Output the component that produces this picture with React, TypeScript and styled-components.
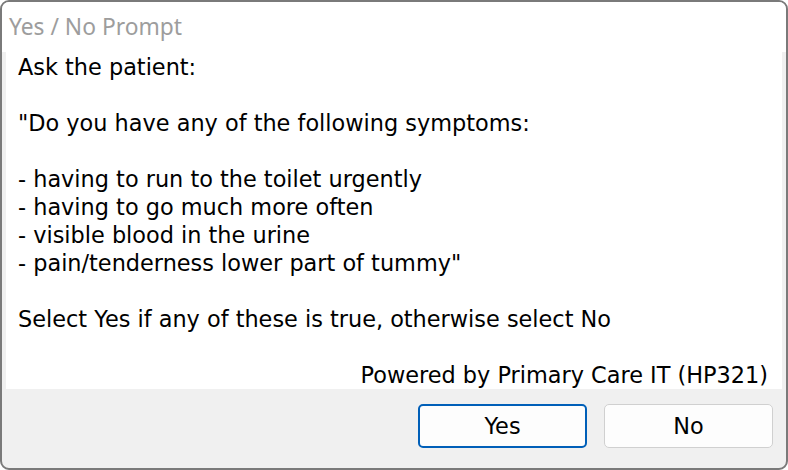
import React, { ReactElement } from 'react'
import styled, { createGlobalStyle } from 'styled-components'

const GlobalStyle = createGlobalStyle`
  html, body {
    margin: 0;
    padding: 0;
    background: #ffffff;
  }
`

const lines = [
  'Ask the patient:',
  '',
  '"Do you have any of the following symptoms:',
  '',
  '- having to run to the toilet urgently',
  '- having to go much more often',
  '- visible blood in the urine',
  '- pain/tenderness lower part of tummy"',
  '',
  'Select Yes if any of these is true, otherwise select No',
  '',
]

export default function App(): ReactElement {
  return (
    <>
      <GlobalStyle />
      <Window>
        <TitleBar>Yes / No Prompt</TitleBar>
        <Content>
          {lines.map((line, i) => (
            <Line key={i}>{line || '\u00a0'}</Line>
          ))}
          <Credit>Powered by Primary Care IT (HP321)</Credit>
        </Content>
        <Footer>
          <DialogButton primary>Yes</DialogButton>
          <DialogButton>No</DialogButton>
        </Footer>
      </Window>
    </>
  )
}

const Window = styled.div`
  box-sizing: border-box;
  width: 788px;
  height: 470px;
  border: 2px solid #7a7a7a;
  border-radius: 9px;
  background: #f0f0f0;
  overflow: hidden;
  display: flex;
  flex-direction: column;
`

const TitleBar = styled.div`
  height: 50px;
  background: #ffffff;
  padding-left: 7px;
  font-family: 'Noto Sans', 'Open Sans', sans-serif;
  font-size: 22.8px;
  line-height: 50px;
  color: #9d9d9d;
`

const Content = styled.div`
  margin: 0 4px;
  height: 336px;
  background: #ffffff;
  padding: 1px 14px 0 12px;
  font-family: 'DejaVu Sans', sans-serif;
  font-size: 22.4px;
  line-height: 28px;
  color: #000000;
`

const Line = styled.div`
  white-space: pre;
`

const Credit = styled.div`
  text-align: right;
`

const Footer = styled.div`
  flex: 1;
  display: flex;
  justify-content: flex-end;
  align-items: flex-start;
  gap: 17px;
  padding: 15px 13px 0 0;
`

const DialogButton = styled.button<{ primary?: boolean }>`
  box-sizing: border-box;
  width: 169px;
  height: 44px;
  border-radius: 5px;
  background: #fdfdfd;
  border: ${(p) => (p.primary ? '2px solid #005fb8' : '1px solid #d0d0d0')};
  font-family: 'DejaVu Sans', sans-serif;
  font-size: 22.4px;
  color: #000000;
  padding: 0;
`
